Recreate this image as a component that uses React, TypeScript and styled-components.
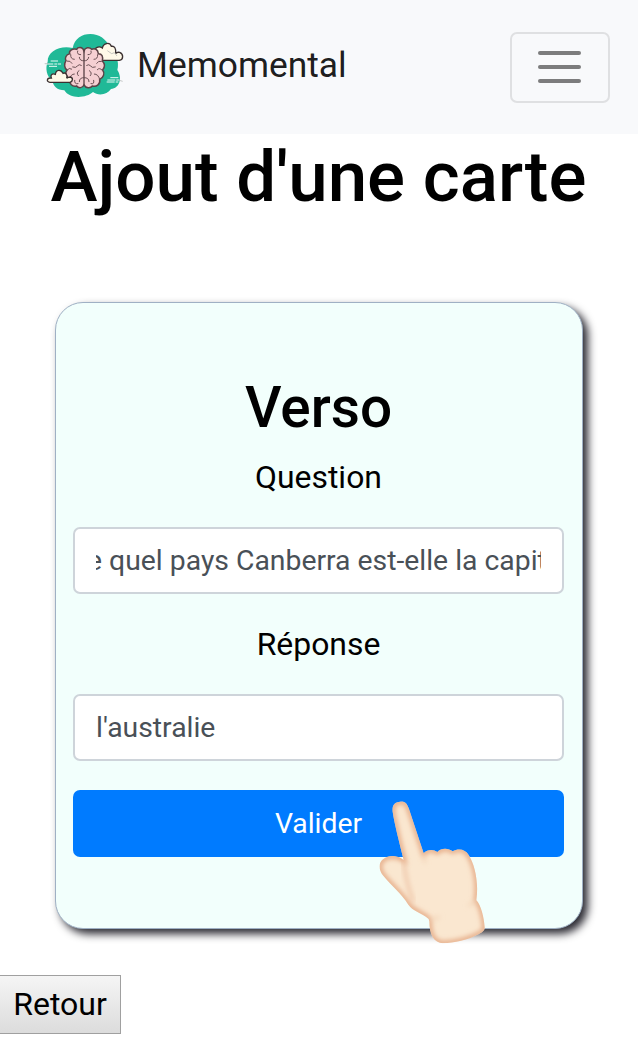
import React from "react";
import styled, { createGlobalStyle } from "styled-components";

const GlobalStyle = createGlobalStyle`
  * { box-sizing: border-box; }
  html, body { margin: 0; padding: 0; background: #fff; }
  body { font-family: Roboto, "Liberation Sans", sans-serif; color: #000; overflow-x: hidden; }
`;

const Page = styled.div`
  display: flex;
  flex-direction: column;
  align-items: flex-start;
  width: 638px;
  height: 1049px;
  overflow: hidden;
`;

const Navbar = styled.nav`
  display: flex;
  align-items: center;
  width: 100%;
  height: 134px;
  padding: 0 28px 0 42px;
  background: #f8f9fb;
`;

const Logo = styled.svg`
  width: 86px;
  height: 70px;
  flex: none;
`;

const Brand = styled.span`
  margin-left: 9px;
  margin-top: -3px;
  font-size: 35.4px;
  line-height: 53px;
  color: rgba(0, 0, 0, 0.9);
`;

const Toggler = styled.button`
  display: flex;
  flex-direction: column;
  align-items: center;
  justify-content: center;
  gap: 10px;
  width: 100px;
  height: 71px;
  margin-left: auto;
  padding: 0 1px 0 0;
  border: 2px solid #dfe0e2;
  border-radius: 7px;
  background: transparent;
`;

const Bar = styled.span`
  width: 43px;
  height: 4px;
  border-radius: 2px;
  background: #7c7c7d;
`;

const Title = styled.h1`
  width: 637px;
  margin: 0;
  font-size: 70.95px;
  font-weight: 500;
  line-height: 85px;
  text-align: center;
  white-space: nowrap;
`;

const Card = styled.section`
  position: relative;
  display: flex;
  flex-direction: column;
  width: 527.5px;
  height: 627px;
  margin: 83px 0 0 55px;
  padding: 61px 17.5px 0 17px;
  border: 1px solid #9fb0c4;
  border-radius: 28px;
  background: #f2fffc;
  box-shadow: 5px 5px 9px #2c2b33;
`;

const CardTitle = styled.h2`
  margin: 10px 0 0;
  font-size: 56.7px;
  font-weight: 500;
  line-height: 68px;
  text-align: center;
`;

const Label = styled.label<{ $top: number }>`
  margin-top: ${(p) => p.$top}px;
  font-size: 31.9px;
  line-height: 48px;
  text-align: center;
`;

const Field = styled.div<{ $top: number }>`
  height: 67px;
  margin-top: ${(p) => p.$top}px;
  padding: 0 21px;
  border: 2px solid #ced4da;
  border-radius: 7px;
  background: #fff;
`;

const FieldText = styled.div<{ $shift?: number }>`
  overflow: hidden;
  white-space: nowrap;
  text-indent: ${(p) => -(p.$shift ?? 0)}px;
  font-size: 28.35px;
  line-height: 64px;
  color: #495057;
`;

const Submit = styled.button`
  height: 67px;
  margin-top: 29px;
  padding: 0;
  border: 0;
  border-radius: 7px;
  background: #007bff;
  color: #fff;
  font: 28.35px/66px Roboto, "Liberation Sans", sans-serif;
`;

const Pointer = styled.svg`
  position: absolute;
  left: 309px;
  top: 477px;
  width: 140px;
  height: 175px;
`;

const Back = styled.button`
  width: 122px;
  height: 59px;
  margin: 46px 0 0 -1px;
  padding: 0;
  border: 1px solid #a0a0a0;
  background: linear-gradient(#f5f5f5, #dcdcdc);
  color: #000;
  font: 32px/57px Roboto, "Liberation Sans", sans-serif;
`;

const BrainLogo = () => (
  <Logo viewBox="36 36 258 210" aria-label="Memomental">
    <path
      fill="#20b997"
      d="M128 84C134 56 155 42 181 42C208 42 229 58 238 80C258 100 269 125 262 150C278 174 269 205 243 207C232 225 204 228 189 216C169 235 118 238 103 211C82 211 69 199 67 181C50 170 45 145 53 125C52 94 91 75 128 84Z"
    />
    <path
      fill="#fff9e8"
      stroke="#3b3030"
      strokeWidth="4"
      d="M190 121H268C281 119 281 102 269 97C262 96 258 99 257 101C259 85 253 77 244 79C239 65 220 69 217 84C207 77 194 82 190 95Z"
    />
    <path
      fill="#f5cfd2"
      stroke="#5b4347"
      strokeWidth="4.5"
      d="M162 93C158 79 143 81 140 88C126 84 116 94 119 101C107 103 104 116 108 122C101 132 103 145 111 150C103 160 111 174 119 177C116 191 128 202 140 198C146 206 158 204 162 195C168 205 181 206 187 198C200 202 212 192 209 178C221 173 225 159 218 150C226 140 224 130 217 123C220 109 216 101 205 101C204 88 194 83 185 88C178 80 165 82 162 93Z"
    />
    <path fill="none" stroke="#5b4347" strokeWidth="4" d="M162 91V198" />
    <path
      fill="none"
      stroke="#6b5155"
      strokeWidth="3"
      strokeLinecap="round"
      d="M162 122Q149 124 148 112M154 136Q147 131 142 138Q139 145 128 141M143 93Q139 104 152 104M122 104Q121 118 133 118M112 123Q121 121 126 130M111 151Q117 141 125 147M119 177Q122 162 133 162M147 152Q137 158 145 167M162 173Q148 172 148 185M134 181Q133 194 144 191M162 122Q174 124 176 112M170 136Q177 131 182 138Q185 145 196 141M183 93Q187 104 174 104M203 104Q204 118 192 118M214 124Q205 121 200 130M217 151Q208 141 202 149M209 178Q205 162 193 162M178 152Q188 158 181 167M162 173Q177 172 177 185M191 181Q194 194 183 191"
    />
    <path
      fill="#fff9e8"
      stroke="#3b3030"
      strokeWidth="4"
      d="M60 187H120C129 185 130 173 121 171C116 171 113 172 110 175C114 163 106 157 99 160C93 147 78 148 76 163C67 159 60 164 64 174C50 173 48 185 60 187Z"
    />
    <path
      fill="none"
      stroke="#e9faf5"
      strokeWidth="3"
      strokeDasharray="24 3 8 2"
      d="M62 123H84M46 132H93M57 139H83M241 173H268M232 180H270M230 186H265"
    />
    <path
      fill="none"
      stroke="#aaaeac"
      strokeWidth="2"
      d="M44 131H56M265 180L278 184M232 92L245 101L253 98L261 108"
    />
  </Logo>
);

const HAND_OUTLINE =
  "M83 95C81 75 89 66 105 65C119 63 126 70 132 87L176 220C187 208 205 207 217 216C229 203 250 204 263 214C281 204 301 208 311 225C329 253 342 306 334 361C348 375 357 412 359 441C360 452 352 457 342 462C310 480 267 488 234 490C207 489 193 464 193 424L191 417C169 397 144 395 130 374C109 340 78 316 53 285C41 269 40 249 54 238C72 224 94 227 108 235L116 240C103 186 88 131 83 95Z";

const HandPointer = () => (
  <Pointer viewBox="0 0 420 525" aria-hidden="true">
    <defs>
      <clipPath id="hand-clip">
        <path d={HAND_OUTLINE} />
      </clipPath>
      <filter id="hand-edge" x="-20%" y="-20%" width="140%" height="140%">
        <feGaussianBlur stdDeviation="8" />
      </filter>
    </defs>
    <g clipPath="url(#hand-clip)">
      <rect width="420" height="525" fill="#fae7d0" />
      <path
        fill="none"
        stroke="#e3a680"
        strokeWidth="14"
        filter="url(#hand-edge)"
        d={HAND_OUTLINE}
      />
      <path
        fill="none"
        stroke="#e9b898"
        strokeWidth="7"
        filter="url(#hand-edge)"
        d="M116 240C119 276 126 316 145 365"
      />
      <path
        fill="none"
        stroke="#f0cfb2"
        strokeWidth="6"
        filter="url(#hand-edge)"
        d="M192 417C205 418 215 414 225 411M310 378L334 361M176 220L180 250"
      />
    </g>
  </Pointer>
);

export default function App() {
  return (
    <>
      <GlobalStyle />
      <Page>
        <Navbar>
          <BrainLogo />
          <Brand>Memomental</Brand>
          <Toggler aria-label="Menu">
            <Bar />
            <Bar />
            <Bar />
          </Toggler>
        </Navbar>
        <Title>Ajout d'une carte</Title>
        <Card>
          <CardTitle>Verso</CardTitle>
          <Label $top={11}>Question</Label>
          <Field $top={26}>
            <FieldText $shift={27.6}>De quel pays Canberra est-elle la capitale ?</FieldText>
          </Field>
          <Label $top={26}>Réponse</Label>
          <Field $top={26}>
            <FieldText>l'australie</FieldText>
          </Field>
          <Submit>Valider</Submit>
          <HandPointer />
        </Card>
        <Back>Retour</Back>
      </Page>
    </>
  );
}
